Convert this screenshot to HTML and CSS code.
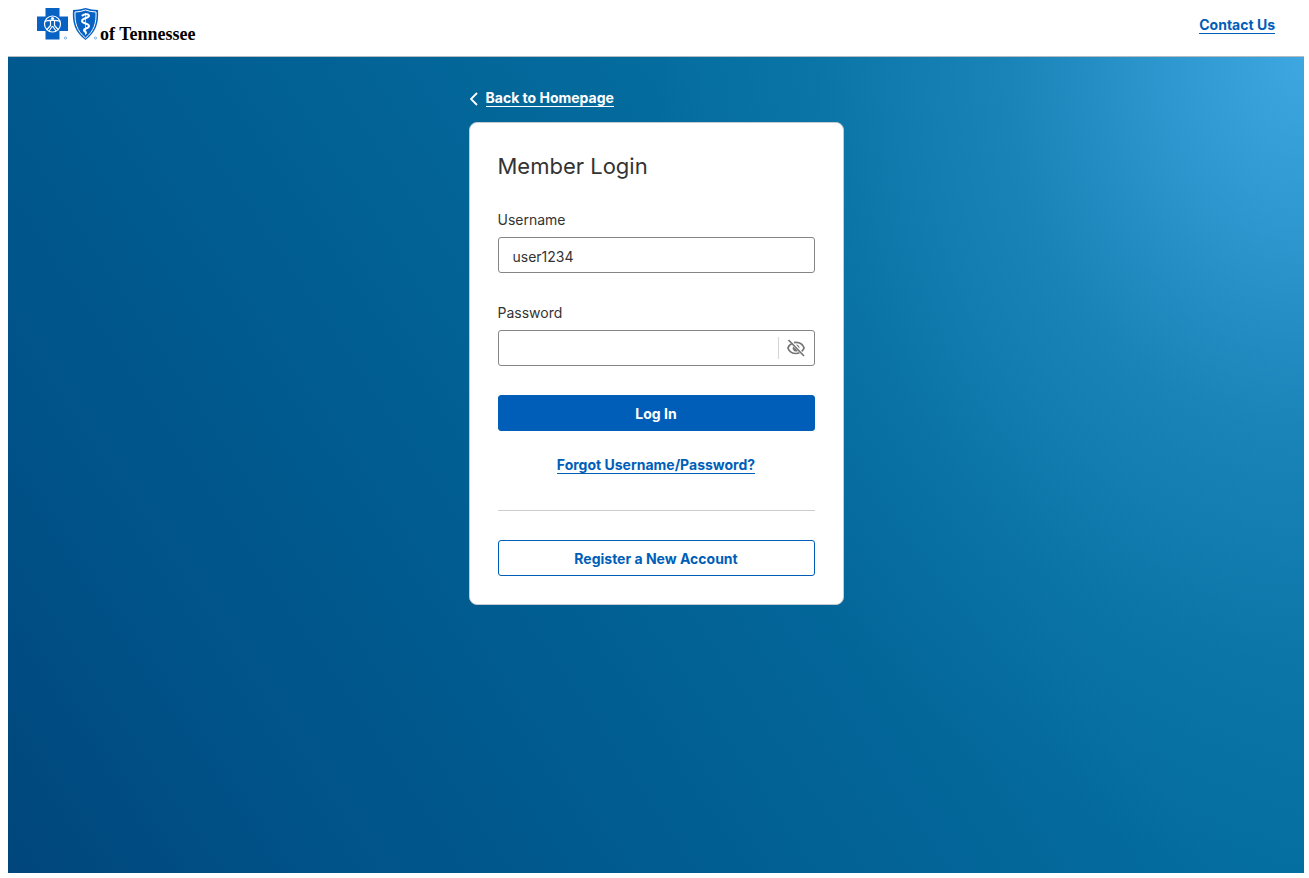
FILE: index.html
```html
<!DOCTYPE html>
<html lang="en">
<head>
<meta charset="utf-8">
<meta name="viewport" content="width=device-width, initial-scale=1">
<title>Member Login</title>
<link rel="stylesheet" href="styles.css">
</head>
<body>
<header class="site-header">
  <div class="brand">
    <svg class="brand-marks" viewBox="0 0 62 34" role="img" aria-label="Blue Cross Blue Shield">
      <path fill="#0862c4" d="M8.500 0h14v8.500H31V23h-8.500v8.500h-14V23H0V8.500h8.500z"/>
      <g fill="none" stroke="#fff" stroke-width="1.200">
        <circle cx="15.500" cy="16" r="8"/>
        <path d="M8 13.500c3-1.500 5-1 7.500-1s4.500-.5 7.500 1M13.500 13v4.500L9.500 22M17.500 13v4.500l4 4.500M15.500 18l-3.500 5M15.500 18l3.500 5"/>
      </g>
      <circle cx="15.500" cy="10.500" r="1.600" fill="#fff"/>
      <circle cx="28.500" cy="30" r="1.100" fill="none" stroke="#4f97dd" stroke-width=".7"/>
      <path fill="#0862c4" d="M36 2Q42 2 48.500 0 55 2 61 2c1 13-2 22-12.500 30C38 24 35 15 36 2z"/>
      <path fill="none" stroke="#fff" stroke-width="1" d="M38 4q5 0 10.500-2Q54 4 59 4c.5 11-2 19-10.500 26C40 23 37.500 15 38 4z"/>
      <path fill="none" stroke="#fff" stroke-width="2" stroke-linecap="round" d="M45.500 7.500c2-2 6.500-1.500 6.500.5s-7 2-7 5 7 2 7 5-5 2-5 4 2 1 2 3"/>
      <path fill="none" stroke="#fff" stroke-width=".7" d="M48.500 5v22"/>
      <circle cx="58.500" cy="30" r="1.100" fill="none" stroke="#4f97dd" stroke-width=".7"/>
    </svg>
    <span class="brand-name">of Tennessee</span>
  </div>
  <a class="link" href="#contact">Contact Us</a>
</header>
<main class="stage">
  <div class="panel">
    <div class="back">
      <svg class="chevron" viewBox="0 0 8 14" aria-hidden="true"><path d="M7 1 1 7l6 6" fill="none" stroke="currentColor" stroke-width="1.800"/></svg>
      <a class="link link-light" href="#home">Back to Homepage</a>
    </div>
    <form class="card">
      <h1 class="title">Member Login</h1>
      <div class="field">
        <label class="label" for="username">Username</label>
        <input class="input" id="username" type="text" value="user1234">
      </div>
      <div class="field">
        <label class="label" for="password">Password</label>
        <div class="input password">
          <input class="password-input" id="password" type="password">
          <button class="toggle" type="button" aria-label="Show password">
            <svg class="eye" viewBox="0 0 18 18" fill="none" stroke="currentColor" stroke-width="1.700" aria-hidden="true">
              <path d="M5.500 4.200C3 5.300 1.500 7.200.9 9c1.100 3 4.300 5.500 8.100 5.500 1.200 0 2.400-.2 3.400-.7M7 3.600c.6-.1 1.300-.2 2-.2 3.800 0 7 2.600 8.100 5.600-.5 1.300-1.300 2.400-2.400 3.300"/>
              <path d="M6 7.500A3.500 3.500 0 0 0 11 12zM9 5.500a3.500 3.500 0 0 1 3.500 4z" fill="currentColor" stroke="none"/>
              <path d="m1.500 1 15.500 16"/>
            </svg>
          </button>
        </div>
      </div>
      <button class="button button-primary" type="submit">Log In</button>
      <a class="link forgot" href="#forgot">Forgot Username/Password?</a>
      <hr class="rule">
      <button class="button button-outline" type="button">Register a New Account</button>
    </form>
  </div>
</main>
</body>
</html>
```
FILE: styles.css
```css
* { box-sizing: border-box; }
body {
  margin: 0;
  padding: 0 5px 5px 8px;
  min-height: 100vh;
  display: flex;
  flex-direction: column;
  background: #fff;
  color: #333;
  font: 14px/20px Inter, "Liberation Sans", sans-serif;
}
.site-header {
  display: flex;
  justify-content: space-between;
  align-items: flex-start;
  padding: 8px 29px 14px;
  border-bottom: 1px solid #b5bcc2;
}
.brand { display: flex; align-items: flex-end; gap: 1px; }
.brand-marks { width: 62px; height: 34px; }
.brand-name {
  color: #000;
  font: bold 18px/16px "Liberation Serif", serif;
}
.link {
  color: #005eb8;
  font-size: 14px;
  font-weight: 700;
  line-height: 16px;
  text-decoration: none;
  border-bottom: 1px solid currentColor;
}
.site-header .link { margin-top: 9px; }
.stage {
  flex: 1;
  display: flex;
  justify-content: center;
  align-items: flex-start;
  padding: 33px 16px;
  background:
    radial-gradient(ellipse 50% 100% at 100% 0, #3ea7e1 0, rgba(62, 167, 225, 0.34) 46%, rgba(62, 167, 225, 0.1) 75%, rgba(62, 167, 225, 0) 100%),
    linear-gradient(56deg, #00467c 0, #005389 18%, #00598e 30%, #056ea0 68%, #0874a6 100%);
}
.panel { width: 100%; max-width: 375px; }
.back {
  display: flex;
  align-items: center;
  gap: 8px;
  padding-left: 1px;
  color: #fff;
}
.chevron { width: 8px; height: 14px; }
.link-light { color: #fff; }
.card {
  display: flex;
  flex-direction: column;
  margin: 15px 0 0;
  padding: 28px;
  background: #fff;
  border: 1px solid #c6cbcf;
  border-radius: 8px;
}
.title {
  margin: 0 0 29px;
  font-size: 22px;
  font-weight: 400;
  line-height: 30px;
}
.field { display: flex; flex-direction: column; gap: 7px; margin-bottom: 30px; }
.field + .field { margin-bottom: 29px; }
.label { line-height: 20px; }
.input {
  width: 100%;
  height: 36px;
  padding: 2px 14px 0;
  border: 1px solid #858585;
  border-radius: 3px;
  background: #fff;
  color: #333;
  font: inherit;
}
.password { display: flex; align-items: center; padding: 0; }
.password-input { flex: 1; min-width: 0; height: 100%; padding: 2px 14px 0; border: 0; background: none; font: inherit; }
.toggle {
  display: flex;
  align-items: center;
  justify-content: center;
  width: 36px;
  height: 22px;
  padding: 0;
  border: 0;
  border-left: 1px solid #d5d5d5;
  background: none;
  color: #757575;
}
.eye { width: 18px; height: 18px; }
.button {
  height: 36px;
  padding: 2px 16px 0;
  border: 1px solid #005eb8;
  border-radius: 3px;
  font: 700 14px/20px Inter, "Liberation Sans", sans-serif;
}
.button-primary { background: #005eb8; color: #fff; }
.button-outline { background: #fff; color: #005eb8; }
.forgot { align-self: center; margin-top: 26px; }
.rule { width: 100%; margin: 36px 0 29px; border: 0; border-top: 1px solid #ccc; }
```
